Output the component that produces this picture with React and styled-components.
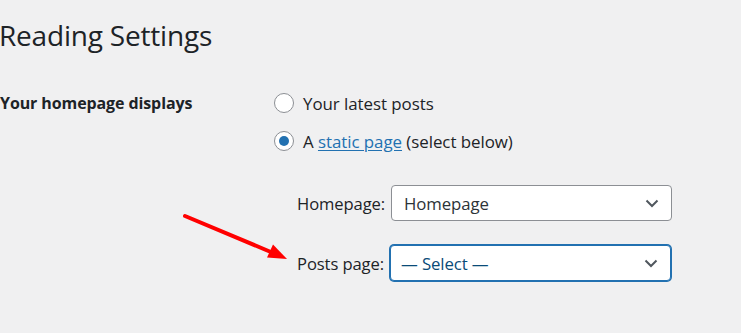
import React from "react";
import styled, { createGlobalStyle } from "styled-components";

const Global = createGlobalStyle`
  html, body { margin: 0; padding: 0; background: #f0f0f1; }
  body { font-family: "Open Sans", "Noto Sans", sans-serif; color: #1d2327; }
  * { box-sizing: border-box; }
`;

const Page = styled.div`
  position: relative;
  width: 741px;
  height: 333px;
  overflow: hidden;
  padding-top: 16px;
`;

const Title = styled.h1`
  margin: 0 0 0 -1px;
  font-size: 28px;
  font-weight: 400;
  line-height: 38px;
  letter-spacing: -0.2px;
`;

const FormRow = styled.div`
  display: grid;
  grid-template-columns: 274px 1fr;
  margin-top: 37px;
`;

const Th = styled.div`
  font-size: 16px;
  font-weight: 700;
  line-height: 24px;
  letter-spacing: -0.1px;
`;

const Options = styled.div`
  display: flex;
  flex-direction: column;
`;

const RadioRow = styled.label`
  display: flex;
  align-items: center;
  gap: 9px;
  height: 24px;
  margin-bottom: ${(p) => p.$mb || 0}px;
  font-size: 16.9px;
  letter-spacing: -0.05px;
`;

const Radio = styled.span`
  width: 20px;
  height: 20px;
  border-radius: 50%;
  border: 1px solid #8c8f94;
  background: #fff;
  display: flex;
  align-items: center;
  justify-content: center;
  flex: none;
  &::after {
    content: "";
    display: ${(p) => (p.$checked ? "block" : "none")};
    width: 10px;
    height: 10px;
    border-radius: 50%;
    background: #2271b1;
  }
`;

const Link = styled.a`
  color: #2271b1;
  text-decoration: underline;
  text-underline-offset: 2px;
`;

const SubList = styled.div`
  display: flex;
  flex-direction: column;
  gap: 24px;
  margin-top: 32px;
  margin-left: 23px;
`;

const SelectRow = styled.div`
  display: flex;
  align-items: center;
  gap: ${(p) => p.$gap}px;
  font-size: 16.6px;
  letter-spacing: -0.1px;
`;

const Select = styled.div`
  position: relative;
  width: ${(p) => p.$w}px;
  height: 36px;
  background: #fff;
  border: 1px solid ${(p) => (p.$focus ? "#2271b1" : "#8c8f94")};
  box-shadow: ${(p) => (p.$focus ? "0 0 0 1px #2271b1" : "none")};
  border-radius: 4px;
  display: flex;
  align-items: center;
  justify-content: space-between;
  padding: 0 12px 0 ${(p) => p.$pl}px;
  font-size: 16.8px;
  color: ${(p) => (p.$focus ? "#0a4b78" : "#2c3338")};
`;

const Chevron = () => (
  <svg width="14" height="9" viewBox="0 0 14 9">
    <polyline points="1.5,1.5 7,7 12.5,1.5" fill="none" stroke="#50575e" strokeWidth="2" />
  </svg>
);

const Arrow = styled.svg`
  position: absolute;
  left: 0;
  top: 0;
  pointer-events: none;
`;

export default function App() {
  return (
    <Page>
      <Global />
      <Title>Reading Settings</Title>
      <FormRow>
        <Th>Your homepage displays</Th>
        <Options>
          <RadioRow $mb={14}>
            <Radio />
            Your latest posts
          </RadioRow>
          <RadioRow>
            <Radio $checked />
            <span>
              A <Link>static page</Link> (select below)
            </span>
          </RadioRow>
          <SubList>
            <SelectRow $gap={6}>
              Homepage:
              <Select $w={281} $pl={12}>
                Homepage
                <Chevron />
              </Select>
            </SelectRow>
            <SelectRow $gap={6}>
              Posts page:
              <Select $w={281} $pl={10} $focus>
                — Select —
                <Chevron />
              </Select>
            </SelectRow>
          </SubList>
        </Options>
      </FormRow>
      <Arrow width="741" height="333" viewBox="0 0 741 333">
        <line x1="185" y1="216" x2="272" y2="252.5" stroke="#ff0000" strokeWidth="4" strokeLinecap="round" />
        <polygon points="287,259 267,257.5 273,244.5" fill="#ff0000" />
      </Arrow>
    </Page>
  );
}
